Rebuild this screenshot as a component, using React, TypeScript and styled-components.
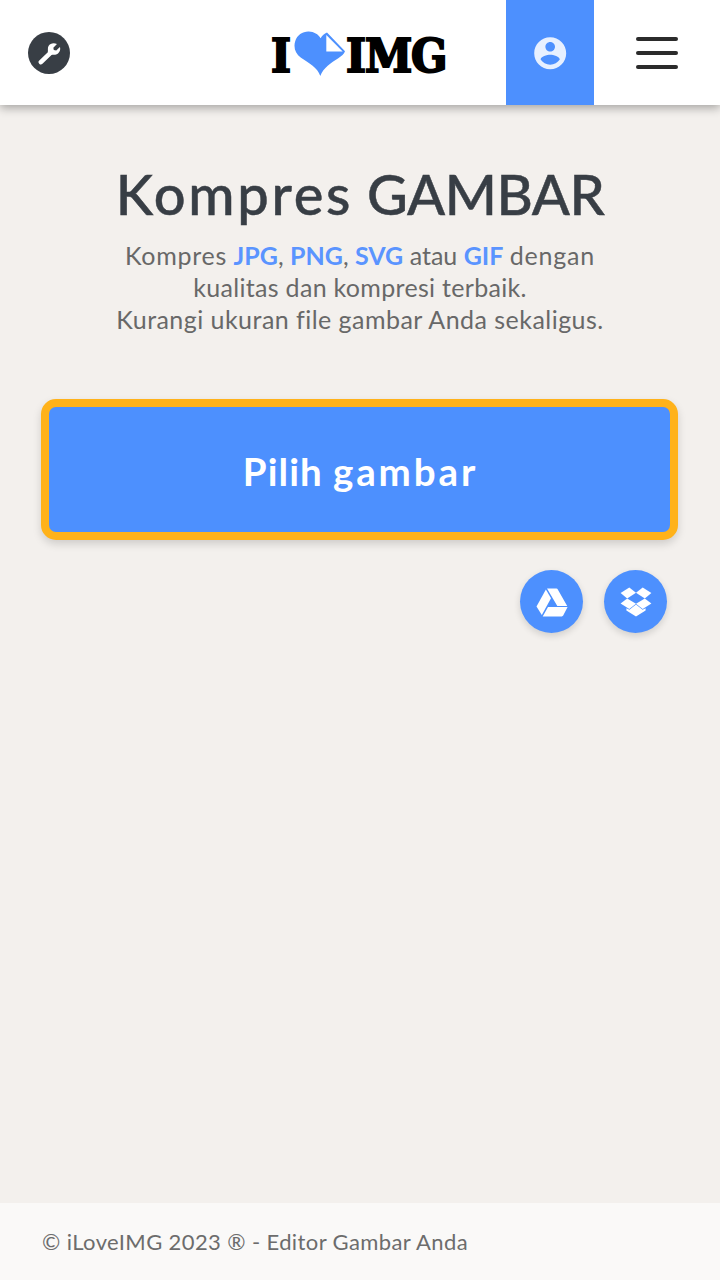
import React from "react";
import styled, { createGlobalStyle } from "styled-components";

const GlobalStyle = createGlobalStyle`
  * { box-sizing: border-box; }
  body { margin: 0; background: #f3f0ed; font-family: Lato, "Open Sans", sans-serif; }
`;

const Page = styled.div`
  display: flex;
  flex-direction: column;
  min-height: 1280px;
  width: 720px;
  overflow: hidden;
`;

const Header = styled.header`
  display: grid;
  grid-template-columns: 98px 1fr 88px 126px;
  height: 105px;
  background: #fff;
  box-shadow: 0 3px 9px rgba(0, 0, 0, 0.32);
`;

const HeaderCell = styled.div<{ $fill?: string }>`
  display: flex;
  align-items: center;
  justify-content: center;
  padding-top: 1px;
  background: ${(p) => p.$fill ?? "transparent"};
`;

const ToolBadge = styled.button`
  display: grid;
  place-items: center;
  width: 42px;
  height: 42px;
  padding: 0;
  border: 0;
  border-radius: 50%;
  background: #383e45;
`;

const Logo = styled.a`
  display: flex;
  align-items: center;
  padding: 2px 0 0 173px;
  height: 105px;
`;

const LogoText = styled.span<{ $width: number; $spacing?: number }>`
  width: ${(p) => p.$width}px;
  padding-top: 2px;
  font: bold 47.5px/60px "DejaVu Serif Condensed", "DejaVu Serif", serif;
  font-stretch: condensed;
  letter-spacing: ${(p) => p.$spacing ?? 0}px;
  color: #000;
  -webkit-text-stroke: 1.9px #000;
  white-space: nowrap;
`;

const MenuBars = styled.div`
  display: flex;
  flex-direction: column;
  gap: 10px;
`;

const Bar = styled.span`
  width: 42px;
  height: 4px;
  border-radius: 2px;
  background: #2b2b2b;
`;

const Main = styled.main`
  flex: 1;
  padding: 55px 42px 0;
`;

const Title = styled.h1`
  display: flex;
  justify-content: center;
  gap: 14px;
  margin: 0;
  font-size: 56px;
  font-weight: 500;
  line-height: 68px;
  color: #383e45;
  -webkit-text-stroke: 0.5px #383e45;
`;

const Word = styled.span<{ $spacing: number }>`
  letter-spacing: ${(p) => p.$spacing}px;
`;

const Intro = styled.p`
  display: flex;
  flex-direction: column;
  align-items: center;
  margin: 12px 0 0;
  font-size: 25px;
  line-height: 31.8px;
  color: #686868;
`;

const Line = styled.span<{ $spacing: number }>`
  letter-spacing: ${(p) => p.$spacing}px;
  white-space: nowrap;
`;

const Format = styled.strong`
  letter-spacing: 0;
  font-weight: 700;
  color: #5a94ff;
`;

const PickButton = styled.button`
  display: flex;
  align-items: center;
  justify-content: center;
  gap: 10px;
  width: 637px;
  height: 141px;
  margin: 63.6px 0 0 -1px;
  padding: 4px 0 0 2px;
  border: 8px solid #ffb21a;
  border-radius: 15px;
  background: #4d90fe;
  box-shadow: 0 4px 9px rgba(0, 0, 0, 0.15);
  font: 700 38.5px/46px Lato, sans-serif;
  color: #fff;
`;

const CloudSources = styled.div`
  display: flex;
  justify-content: flex-end;
  gap: 21px;
  padding: 30.5px 11px 0 0;
`;

const CloudButton = styled.button`
  display: grid;
  place-items: center;
  width: 63px;
  height: 63px;
  padding: 1px 0 0 1px;
  border: 0;
  border-radius: 50%;
  background: #4d90fe;
  box-shadow: 0 3px 7px rgba(0, 0, 0, 0.14);
`;

const Footer = styled.footer`
  height: 77px;
  padding: 24px 42px 0;
  background: #faf9f8;
  font-size: 22px;
  line-height: 30px;
  letter-spacing: 0.39px;
  color: #6c6c6c;
  white-space: nowrap;
`;

const WrenchIcon = () => (
  <svg width="23" height="23" viewBox="0 0 24 24">
    <path
      d="M3 21 L13 11.3"
      stroke="#fff"
      strokeWidth="4.8"
      strokeLinecap="round"
      fill="none"
    />
    <path
      d="M19.8 2.1 L16 5.9 L16.5 8.4 L19 8.9 L22.9 5.2 C23.8 8.2 22.4 11.4 19.6 12.7 C17.5 13.6 15.2 13.1 13.2 13.5 L10.2 10.7 C10.7 8.4 9.8 6.3 11 4.1 C12.7 1.3 16.5 .3 19.8 2.1Z"
      fill="#fff"
    />
  </svg>
);

const HeartIcon = () => (
  <svg width="52" height="46" viewBox="0 0 52 46">
    <path
      d="M26.3 45 C23.5 36.5 15.2 32.3 7 26.8 C1.2 22.7 -.7 16.2 1.2 10.2 C3.2 3.8 8.7 .3 14.8 .5 C20 .7 24.2 3.2 26.6 7.2 C28.3 4.4 30.2 2.5 33 1.5 L51 20.3 C50 23.5 47.7 25 44.3 27.2 C37 31.9 29.5 36.4 26.3 45Z"
      fill="#4d90fe"
    />
    <path d="M32.3 4 V20.6 H48.7Z" fill="#fff" />
  </svg>
);

const AccountIcon = () => (
  <svg width="38.4" height="38.4" viewBox="0 0 24 24" fill="#e7f0ff">
    <path d="M12 2C6.48 2 2 6.48 2 12s4.48 10 10 10 10-4.48 10-10S17.52 2 12 2zm0 3c1.66 0 3 1.34 3 3s-1.34 3-3 3-3-1.34-3-3 1.34-3 3-3zm0 14.2c-2.5 0-4.71-1.28-6-3.22.03-1.99 4-3.08 6-3.08 1.99 0 5.97 1.09 6 3.08-1.29 1.94-3.5 3.22-6 3.22z" />
  </svg>
);

const DriveIcon = () => (
  <svg width="32" height="29" viewBox="0 0 32 29" fill="#fff">
    <path d="M9.9 1.4 L15 10.2 L5.8 27 L.5 18.6Z" />
    <path d="M11 .5 H20.5 Q21.3 .5 21.8 1.4 L31.2 17.9 H21.3Z" />
    <path d="M12 19 H31.6 L27.2 27.6 Q26.8 28.4 25.8 28.4 H6.7Z" />
  </svg>
);

const DropboxIcon = () => (
  <svg width="32" height="30" viewBox="0 0 32 30" fill="#fff">
    <path d="M9.3 .6 L16 5.8 L7.2 11.4 L.6 6.1Z" />
    <path d="M22.7 .6 L31.4 6.1 L24.8 11.4 L16 5.8Z" />
    <path d="M7.2 11.4 L16 16.8 L9.3 22 L.6 16.5Z" />
    <path d="M24.8 11.4 L31.4 16.5 L22.7 22 L16 16.8Z" />
    <path d="M16 17.6 L22.6 22.8 L25.6 21.2 V23.4 L16 29.4 L6.4 23.4 V21.2 L9.4 22.8Z" />
  </svg>
);

export default function App() {
  return (
    <>
      <GlobalStyle />
      <Page>
        <Header>
          <HeaderCell>
            <ToolBadge aria-label="Alat">
              <WrenchIcon />
            </ToolBadge>
          </HeaderCell>
          <Logo>
            <LogoText $width={23}>I</LogoText>
            <HeartIcon />
            <LogoText $width={100} $spacing={-1.1}>IMG</LogoText>
          </Logo>
          <HeaderCell $fill="#4d90fe">
            <AccountIcon />
          </HeaderCell>
          <HeaderCell>
            <MenuBars>
              <Bar />
              <Bar />
              <Bar />
            </MenuBars>
          </HeaderCell>
        </Header>
        <Main>
          <Title>
            <Word $spacing={2.7}>Kompres</Word>
            <Word $spacing={-0.5}>GAMBAR</Word>
          </Title>
          <Intro>
            <Line $spacing={0}>
              <Word $spacing={0.75}>Kompres</Word> <Format>JPG</Format>, <Format>PNG</Format>,{" "}
              <Format>SVG</Format> atau <Format>GIF</Format> <Word $spacing={0.8}>dengan</Word>
            </Line>
            <Line $spacing={0.3}>kualitas dan kompresi terbaik.</Line>
            <Line $spacing={0.46}>Kurangi ukuran file gambar Anda sekaligus.</Line>
          </Intro>
          <PickButton>
            <Word $spacing={1.1}>Pilih</Word>
            <Word $spacing={2.9}>gambar</Word>
          </PickButton>
          <CloudSources>
            <CloudButton aria-label="Google Drive">
              <DriveIcon />
            </CloudButton>
            <CloudButton aria-label="Dropbox">
              <DropboxIcon />
            </CloudButton>
          </CloudSources>
        </Main>
        <Footer>© iLoveIMG 2023 ® - Editor Gambar Anda</Footer>
      </Page>
    </>
  );
}
